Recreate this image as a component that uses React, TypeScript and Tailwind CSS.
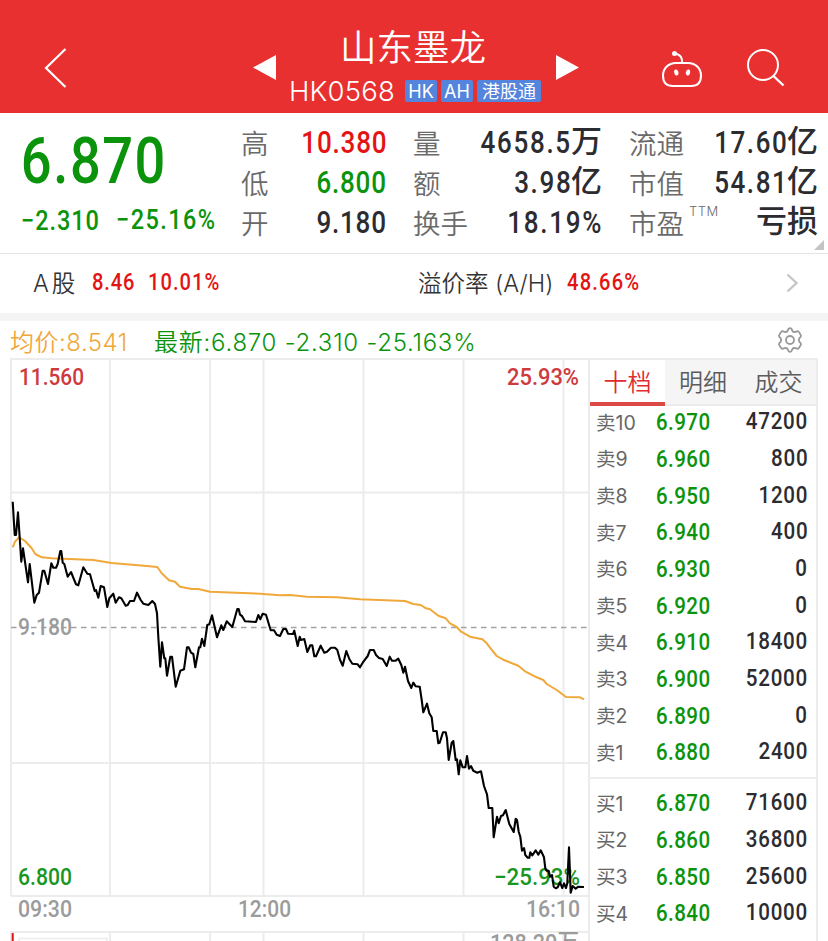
import type { ReactNode } from 'react';

const SANS = "font-['Inter','Noto_Sans_CJK_SC',sans-serif]";

type Align = 'left' | 'right';

/** Condensed tabular figures, anchored to one side of their cell. */
function Num({
  children,
  align = 'left',
  className = '',
  tracking = 'tracking-[0.04em]',
}: {
  children: ReactNode;
  align?: Align;
  className?: string;
  tracking?: string;
}) {
  return (
    <span
      className={`inline-block whitespace-nowrap font-['Roboto','Noto_Sans_CJK_SC',sans-serif] font-medium tabular-nums scale-x-[.84] ${tracking} ${
        align === 'left' ? 'origin-left' : 'origin-right -mr-[0.04em]'
      } ${className}`}
    >
      {children}
    </span>
  );
}

function Tag({ children, className }: { children: ReactNode; className: string }) {
  return (
    <span className={`flex h-[22px] items-center justify-center rounded-[2px] bg-[#5484dc] pt-[2px] text-[18px] leading-none text-white ${className}`}>
      {children}
    </span>
  );
}

function Header() {
  return (
    <header className="flex h-[113px] bg-[#e93030] text-white">
      <div className="w-[252px] pt-[48px] pl-[44px]">
        <svg width="24" height="42" viewBox="0 0 24 42" fill="none" stroke="#fff" strokeWidth="2.2">
          <path d="M21.5 1L2 20L21.5 39" />
        </svg>
      </div>
      <div className="w-[26px] pt-[54px]">
        <svg width="26" height="28" viewBox="0 0 26 28" fill="#fff">
          <path d="M1 13.5L24 1V26Z" />
        </svg>
      </div>
      <div className="flex w-[278px] flex-col pl-[11px]">
        <h1 className="mt-[24px] pl-[51px] text-[36.5px] leading-[49px] font-[350]">山东墨龙</h1>
        <div className="mt-[7px] flex items-center">
          <span className="w-[116px] text-[27.5px] leading-[22px] font-[350] tracking-[0.2px] whitespace-nowrap">HK0568</span>
          <Tag className="w-[32px]">HK</Tag>
          <Tag className="ml-[4px] w-[32px]">AH</Tag>
          <Tag className="ml-[4px] w-[64px]">港股通</Tag>
        </div>
      </div>
      <div className="w-[105px] pt-[54px]">
        <svg width="24" height="28" viewBox="0 0 24 28" fill="#fff">
          <path d="M0 1V26L23 13.5Z" />
        </svg>
      </div>
      <div className="w-[86px] pt-[50px]">
        <svg width="42" height="38" viewBox="0 0 42 38" fill="none" stroke="#fff" strokeWidth="2">
          <path d="M21 13C21.5 8 19 4.5 14 3.6" />
          <circle cx="13.5" cy="3.5" r="2.5" fill="#fff" stroke="none" />
          <path d="M15 13H27C35 13 40 19 40 25.5C40 33 36 36 30 36H12C6 36 2 33 2 25.5C2 19 7 13 15 13Z" />
          <ellipse cx="15.3" cy="22.5" rx="2.1" ry="3" fill="#fff" stroke="none" transform="rotate(-12 15.3 22.5)" />
          <ellipse cx="27" cy="22.5" rx="2.1" ry="3" fill="#fff" stroke="none" transform="rotate(12 27 22.5)" />
        </svg>
      </div>
      <div className="pt-[48px]">
        <svg width="40" height="40" viewBox="0 0 40 40" fill="none" stroke="#fff" strokeWidth="2">
          <circle cx="16" cy="17" r="15" />
          <path d="M26.5 28L36.5 37.5" strokeWidth="2.4" />
        </svg>
      </div>
    </header>
  );
}

type Stat = { label: string; value: string; unit?: string; tone?: string; sup?: string };

const stats: { width: string; tracking: string; rows: Stat[] }[] = [
  {
    width: 'w-[145px]',
    tracking: 'tracking-[0.03em]',
    rows: [
      { label: '高', value: '10.380', tone: 'text-[#e31414]' },
      { label: '低', value: '6.800', tone: 'text-[#0b930b]' },
      { label: '开', value: '9.180' },
    ],
  },
  {
    width: 'w-[189px] ml-[27px]',
    tracking: 'tracking-[0.065em]',
    rows: [
      { label: '量', value: '4658.5', unit: '万' },
      { label: '额', value: '3.98', unit: '亿' },
      { label: '换手', value: '18.19%' },
    ],
  },
  {
    width: 'w-[189px] ml-[27px]',
    tracking: 'tracking-[0.06em]',
    rows: [
      { label: '流通', value: '17.60', unit: '亿' },
      { label: '市值', value: '54.81', unit: '亿' },
      { label: '市盈', value: '', unit: '亏损', sup: 'TTM' },
    ],
  },
];

function Quote() {
  return (
    <section className="relative flex h-[141px] border-b border-[#e4e4e4]">
      <div className="w-[241px] pl-[21px]">
        <div className="h-[76px] pt-[14px] text-[64.5px] leading-[66px] text-[#0b930b]">
          <Num tracking="tracking-[0.028em]">6.870</Num>
        </div>
        <div className="flex pt-[14px] text-[28px] leading-[34px] text-[#0b930b]">
          <div className="w-[95px]">
            <Num>−2.310</Num>
          </div>
          <Num tracking="tracking-[0.06em]">−25.16%</Num>
        </div>
      </div>
      {stats.map((col, i) => (
        <div key={i} className={`flex flex-col pt-[10px] ${col.width}`}>
          {col.rows.map((r) => (
            <div key={r.label} className="flex h-[40px] items-center justify-between">
              <span className="flex pt-[2px] text-[27.5px] leading-[40px] font-[350] text-[#6a6a6a]">
                {r.label}
                {r.sup && <span className="ml-[5px] text-[13px] leading-[14px] tracking-[0.5px]">{r.sup}</span>}
              </span>
              <span className={`flex items-center ${r.tone ?? 'text-[#2c2c30]'}`}>
                <Num align="right" tracking={col.tracking} className="text-[31px] leading-[40px]">
                  {r.value}
                </Num>
                {r.unit && <span className="-mt-[5px] text-[31px] leading-[40px] font-medium">{r.unit}</span>}
              </span>
            </div>
          ))}
        </div>
      ))}
      <svg className="absolute right-[4px] bottom-[3px]" width="10" height="10" viewBox="0 0 10 10" fill="#c4c4c4">
        <path d="M10 0V10H0Z" />
      </svg>
    </section>
  );
}

function PremiumBar() {
  return (
    <section className="flex h-[59px] items-center text-[23.5px] font-[350] text-[#333]">
      <span className="w-[92px] pl-[33px] whitespace-nowrap">
        A<span className="ml-[3px]">股</span>
      </span>
      <span className="-mt-[3px] w-[56px] text-[#e31414]">
        <Num className="text-[24px]">8.46</Num>
      </span>
      <span className="-mt-[3px] w-[270px] text-[#e31414]">
        <Num tracking="tracking-[0.05em]" className="text-[24px]">
          10.01%
        </Num>
      </span>
      <span className="w-[149px] whitespace-nowrap">溢价率 (A/H)</span>
      <span className="-mt-[3px] w-[219px] text-[#e31414]">
        <Num tracking="tracking-[0.058em]" className="text-[24px]">
          48.66%
        </Num>
      </span>
      <svg className="-mt-[2px]" width="14" height="20" viewBox="0 0 14 20" fill="none" stroke="#c6c6c6" strokeWidth="2.4">
        <path d="M1.5 1.5L10.5 10L1.5 18.5" />
      </svg>
    </section>
  );
}

const pricePath =
  'M12.7 501.7L14.7 535H16L18 512.3L21.3 561.7L23 548.3L28 582.3L29.7 564L34.3 602.7L36.7 595L39 592.7L42.7 570.7H44.3L48 584L51.3 563.3L53.3 567.7H56L57.7 564L60.3 551H61.3L62.7 562.7L64.3 564L67.7 576.7L71 572L76 584.3L78.3 585.3L80 579.3L83.3 567.3L87.3 573.7L90 574.3L94.7 591L96 590L98.3 597.7L100.7 586L104 587.3L107.3 607L109.3 598.3L113.3 593.7L115.7 602.7L119 597.3L121.3 598.3L125.7 605.7L127.7 605L130 601H134L137 592.7L140.7 600L143.3 603.7L148.3 605L152.3 601L155 604L157 613.3L158.3 636.7L160.3 666.7L162 642.3L164.3 658.3H165.3L167 675.7L170.3 656.7H172L175.7 686.7L180.3 670.7L184 669.3L187 647.3H188.7L191 652.7L193.3 654L195.3 667.3L199 647.3H200.3L202 638.7L204.3 646L207.3 625L209.3 624.3L212 615.3L217 637.3L221.3 625.3L223.3 630L226.7 621.3L232.3 627L237.3 609H238.7L240 614.7L242 616L245 621.3L256 622L258.3 615L260.3 619.3L262.7 613.7L266 614.7L270.7 630.3H274L276.7 634.7L280 636L283.3 629H286L288 633.7L293 634L294.3 630.7L297.7 646L299.7 636.7L301 640L304.3 639L307.3 652L310.3 645.3H312.3L314.3 656.3H316L320.7 645.7L324.3 652.7L327 651.7L331 647.7H335L337.3 650L340 659.7L342.7 665.7L346.3 651L349.3 659L352.3 663.7L357.7 664.3L360 667.3L362.7 662.7L367.7 656L370 650H373.7L376 655L379 658L382.7 659L386.7 666L389.7 656.7L392 660.7H395.7L398.3 658.7L401.3 665L403.3 672.7L405 666.7L408 681L411.3 688L413.3 682.7L415.7 686.3L419.7 686.7L421.7 700L423.3 712.3L427 703.7L429.3 713.3L431.7 717.3L433.3 731H436.7L438.3 743.3L439.7 742.7L443 732.3H445.7L447 738.3L448.7 760L451.7 742.7L453.3 741L455.7 760L457 759.3L458.7 774.3L460.3 760.3L462.7 767.3H465.3L467 756L469 768.7L471 766L473.3 770.7L477.3 772.7L481 771.3L484 786L487 794.3L488.7 808H492.3L493.7 837.3L497 816.7L498.7 823.3L501 816L503 815.3L505.7 810L509.3 824L513.7 832L515.7 818.7L517 820L518.7 831.7L520.3 836.7L522 850.7L524 848L525.3 855L527.7 857.7H529.3L530.3 852.3L532.3 855.3L535.7 850.3L538.3 854.7L540.7 850.3L544 857.3L545.3 868.3L546.7 870.7H548.7L550 876.7L552 875L553.7 886.7L555.7 888.3L557.7 887.3L560 882.3L562.3 888L564 883.3L566 888L567.3 883.3L569 847.3L570.7 892.7L572.7 886L575.7 888.7L578.3 886.7L584 887';

const averagePath =
  'M12.7 547.3L15 541.7L19 537.3L25 541L31.7 548.3L35.3 554L41.7 557.3L51.7 558.3L93.3 560L111.7 563L146.7 566L157.3 567L161.7 573.3L169 580.3L175 581.7L180 586.7L191.7 589L198.3 589L210 591.7L260 593.7L280 595.3L290 595L306.7 596.7L336.7 597.3L360 599.3L405 601L413.3 604L420.7 605L426 608.3L430 609.3L438.3 615.7L445.7 618.3L450 623.3L456.7 627L460.7 631.3L470 636.7L482.3 639.3L486.7 643.3L490 647.7L496.7 656L503.3 659.7L518.3 665.7L525 671.3L536.7 677.3L543.3 680L546.7 684L556.7 690L566 697L580 697.3L584 699.3';

function Chart() {
  const num = "font-['Roboto','Noto_Sans_CJK_SC',sans-serif] text-[23.5px] font-medium";
  return (
    <svg className="block" width="588" height="583" viewBox="0 358 588 583" fill="none">
      <g stroke="#ececec" strokeWidth="2">
        <path d="M11 896V359H588M11 896H588M11 492.500H588M11 763H588" />
        <path d="M110 359V896M210 359V896M263.500 359V896M363.500 359V896M463.500 359V896M563.500 359V896" />
        <path d="M11 941V932H588M110 932V941M210 932V941M263.500 932V941M363.500 932V941M463.500 932V941M563.500 932V941" />
        <path d="M19 941V938.500H107V941" strokeWidth="1.500" />
      </g>
      <path d="M12.700 933V941" stroke="#e31414" strokeWidth="2" />
      <path d="M11 627.500H588" stroke="#a2a2a2" strokeWidth="1.300" strokeDasharray="5.500 4.500" />
      <text className={num} x="19" y="385" fill="#cf3a3e" textLength="65" lengthAdjust="spacingAndGlyphs">11.560</text>
      <text className={num} x="507" y="385" fill="#cf3a3e" textLength="72" lengthAdjust="spacingAndGlyphs">25.93%</text>
      <text className={num} x="18" y="635" fill="#9b9b9b" textLength="54" lengthAdjust="spacingAndGlyphs">9.180</text>
      <text className={num} x="18" y="885" fill="#18961f" textLength="54" lengthAdjust="spacingAndGlyphs">6.800</text>
      <text className={num} x="494" y="885" fill="#18961f" textLength="86" lengthAdjust="spacingAndGlyphs">−25.93%</text>
      <text className={num} x="18" y="917" fill="#9b9b9b" textLength="54" lengthAdjust="spacingAndGlyphs">09:30</text>
      <text className={num} x="238" y="917" fill="#9b9b9b" textLength="53" lengthAdjust="spacingAndGlyphs">12:00</text>
      <text className={num} x="526" y="917" fill="#9b9b9b" textLength="54" lengthAdjust="spacingAndGlyphs">16:10</text>
      <text className={num} x="490" y="951" fill="#9b9b9b" textLength="89" lengthAdjust="spacingAndGlyphs">128.20万</text>
      <path d={averagePath} stroke="#f0a83a" strokeWidth="2" strokeLinejoin="round" />
      <path d={pricePath} stroke="#000" strokeWidth="2.1" strokeLinejoin="round" />
    </svg>
  );
}

const sells: [string, string, string][] = [
  ['卖10', '6.970', '47200'],
  ['卖9', '6.960', '800'],
  ['卖8', '6.950', '1200'],
  ['卖7', '6.940', '400'],
  ['卖6', '6.930', '0'],
  ['卖5', '6.920', '0'],
  ['卖4', '6.910', '18400'],
  ['卖3', '6.900', '52000'],
  ['卖2', '6.890', '0'],
  ['卖1', '6.880', '2400'],
];

const buys: [string, string, string][] = [
  ['买1', '6.870', '71600'],
  ['买2', '6.860', '36800'],
  ['买3', '6.850', '25600'],
  ['买4', '6.840', '10000'],
];

function Level({ row: [name, price, volume] }: { row: [string, string, string] }) {
  return (
    <div className="flex h-[36.67px] items-center pr-[9px] pl-[6px] leading-[36px]">
      <span className="w-[60px] pt-px text-[19.5px] font-normal text-[#666]">{name}</span>
      <Num tracking="tracking-[0.02em]" className="text-[24.5px] text-[#0b930b]">
        {price}
      </Num>
      <span className="ml-auto text-[#2c2c30]">
        <Num align="right" tracking="tracking-[0.035em]" className="text-[24.5px]">
          {volume}
        </Num>
      </span>
    </div>
  );
}

function OrderBook() {
  return (
    <aside className="h-[583px] w-[230px] overflow-hidden border-x-2 border-t-2 border-[#ececec]">
      <div className="flex h-[46px] text-[24px] leading-[45px] font-[350] text-[#5c5c5c]">
        <div className="w-[75px] border-b-4 border-[#db4a44] text-center text-[#e02c30]">十档</div>
        <div className="w-[76px] border-b-2 border-[#ececec] bg-[#f5f5f5] text-center">明细</div>
        <div className="flex-1 border-b-2 border-[#ececec] bg-[#f5f5f5] text-center">成交</div>
      </div>
      <div className="flow-root h-[373px] border-b-2 border-[#ececec]">
        <div className="-mt-[2px]">
          {sells.map((r) => (
            <Level key={r[0]} row={r} />
          ))}
        </div>
      </div>
      <div className="pt-[6px]">
        {buys.map((r) => (
          <Level key={r[0]} row={r} />
        ))}
      </div>
    </aside>
  );
}

export default function App() {
  return (
    <div className={`h-[941px] w-[828px] overflow-hidden bg-white ${SANS}`}>
      <Header />
      <Quote />
      <PremiumBar />
      <div className="h-[8px] bg-[#f4f4f4]" />
      <div className="flex h-[37px] items-center text-[24px] font-[350] whitespace-nowrap">
        <span className="w-[154px] pt-[7px] pl-[10px] tracking-[0.5px] text-[#efa73a]">均价:8.541</span>
        <span className="w-[623px] pt-[7px] tracking-[0.75px] text-[#0b930b]">最新:6.870 -2.310 -25.163%</span>
        <svg width="26" height="26" viewBox="0 0 26 26" fill="none" stroke="#999" strokeWidth="1.800" strokeLinejoin="round">
          <path d="M10.800 3.600Q11.300 1.200 13 1.200T15.200 3.600Q16 5.500 18.500 4.800L20.800 4.200Q22 4.500 24 8.600Q24.200 9.800 22.300 11.200Q21.300 13 22.300 14.800Q24.200 16.200 24 17.400Q22 21.500 20.800 21.800L18.500 21.200Q16 20.500 15.200 22.400Q14.700 24.800 13 24.800T10.800 22.400Q10 20.500 7.500 21.200L5.200 21.800Q4 21.500 2 17.400Q1.800 16.200 3.700 14.800Q4.700 13 3.700 11.200Q1.800 9.800 2 8.600Q4 4.500 5.200 4.200L7.500 4.800Q10 5.500 10.800 3.600Z" />
          <circle cx="13" cy="13" r="4" />
        </svg>
      </div>
      <main className="flex">
        <Chart />
        <OrderBook />
      </main>
    </div>
  );
}
